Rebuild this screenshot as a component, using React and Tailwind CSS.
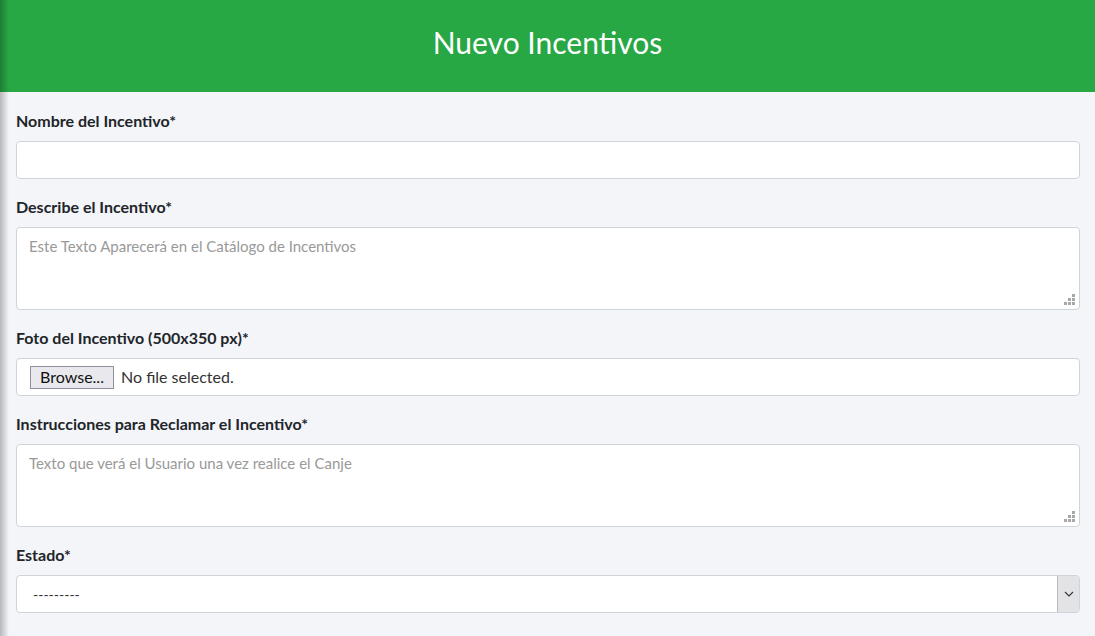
import React from "react";

function Grip() {
  // firefox-style dotted resize grip
  return (
    <svg width="11" height="11" viewBox="0 0 11 11" className="absolute right-[4px] bottom-[4px]">
      <rect x="8" y="0" width="3" height="3" fill="#a8a8a8" />
      <rect x="4" y="4" width="3" height="3" fill="#a8a8a8" />
      <rect x="8" y="4" width="3" height="3" fill="#a8a8a8" />
      <rect x="0" y="8" width="3" height="3" fill="#a8a8a8" />
      <rect x="4" y="8" width="3" height="3" fill="#a8a8a8" />
      <rect x="8" y="8" width="3" height="3" fill="#a8a8a8" />
    </svg>
  );
}

function Label({ children }) {
  return <div className="text-[16px] font-bold text-[#212529] leading-[20px] mb-[10px]">{children}</div>;
}

function TextArea({ placeholder }) {
  return (
    <div className="relative h-[83px] bg-white border border-[#ced4da] rounded-[4px]">
      <textarea
        placeholder={placeholder}
        className="w-full h-full resize-none outline-none bg-transparent px-3 pt-[8px] text-[15px] leading-[20px] text-[#495057] placeholder:text-[#999]"
      />
      <Grip />
    </div>
  );
}

export default function App() {
  return (
    <div className="relative min-h-[636px] bg-[#f4f5f9] font-['Lato','Open_Sans',sans-serif] overflow-hidden">
      {/* left edge shadow */}
      <div className="absolute left-0 top-0 bottom-0 w-[9px] bg-gradient-to-r from-black/25 to-transparent pointer-events-none z-10" />

      <header className="h-[92px] bg-[#28a745] flex items-center justify-center">
        <h1 className="text-white text-[30px] font-normal -mt-[7px]">Nuevo Incentivos</h1>
      </header>

      <form className="pl-4 pr-[15px] pt-[19px] flex flex-col gap-[18px]">
        <div>
          <Label>Nombre del Incentivo*</Label>
          <input className="w-full h-[38px] bg-white border border-[#ced4da] rounded-[4px] px-3 outline-none" />
        </div>

        <div>
          <Label>Describe el Incentivo*</Label>
          <TextArea placeholder="Este Texto Aparecerá en el Catálogo de Incentivos" />
        </div>

        <div>
          <Label>Foto del Incentivo (500x350 px)*</Label>
          <div className="h-[38px] bg-white border border-[#ced4da] rounded-[4px] flex items-center pl-[13px] gap-[7px]">
            <span className="h-[23px] w-[84px] bg-[#e9e9ed] border border-[#8f8f9d] flex items-center justify-center text-[16px] text-[#111] leading-none">
              Browse...
            </span>
            <span className="text-[16px] text-[#333]">No file selected.</span>
          </div>
        </div>

        <div>
          <Label>Instrucciones para Reclamar el Incentivo*</Label>
          <TextArea placeholder="Texto que verá el Usuario una vez realice el Canje" />
        </div>

        <div>
          <Label>Estado*</Label>
          <div className="h-[38px] bg-white border border-[#ced4da] rounded-[4px] flex items-center">
            <span className="flex-1 pl-4 text-[14px] text-[#333]">---------</span>
            <span className="w-[22px] h-[36px] bg-[#e3e3e6] border-l border-[#bbb] rounded-r-[3px] flex items-center justify-center">
              <svg width="10" height="6" viewBox="0 0 10 6">
                <path d="M1 1l4 4 4-4" fill="none" stroke="#333" strokeWidth="1.1" />
              </svg>
            </span>
          </div>
        </div>
      </form>
    </div>
  );
}
